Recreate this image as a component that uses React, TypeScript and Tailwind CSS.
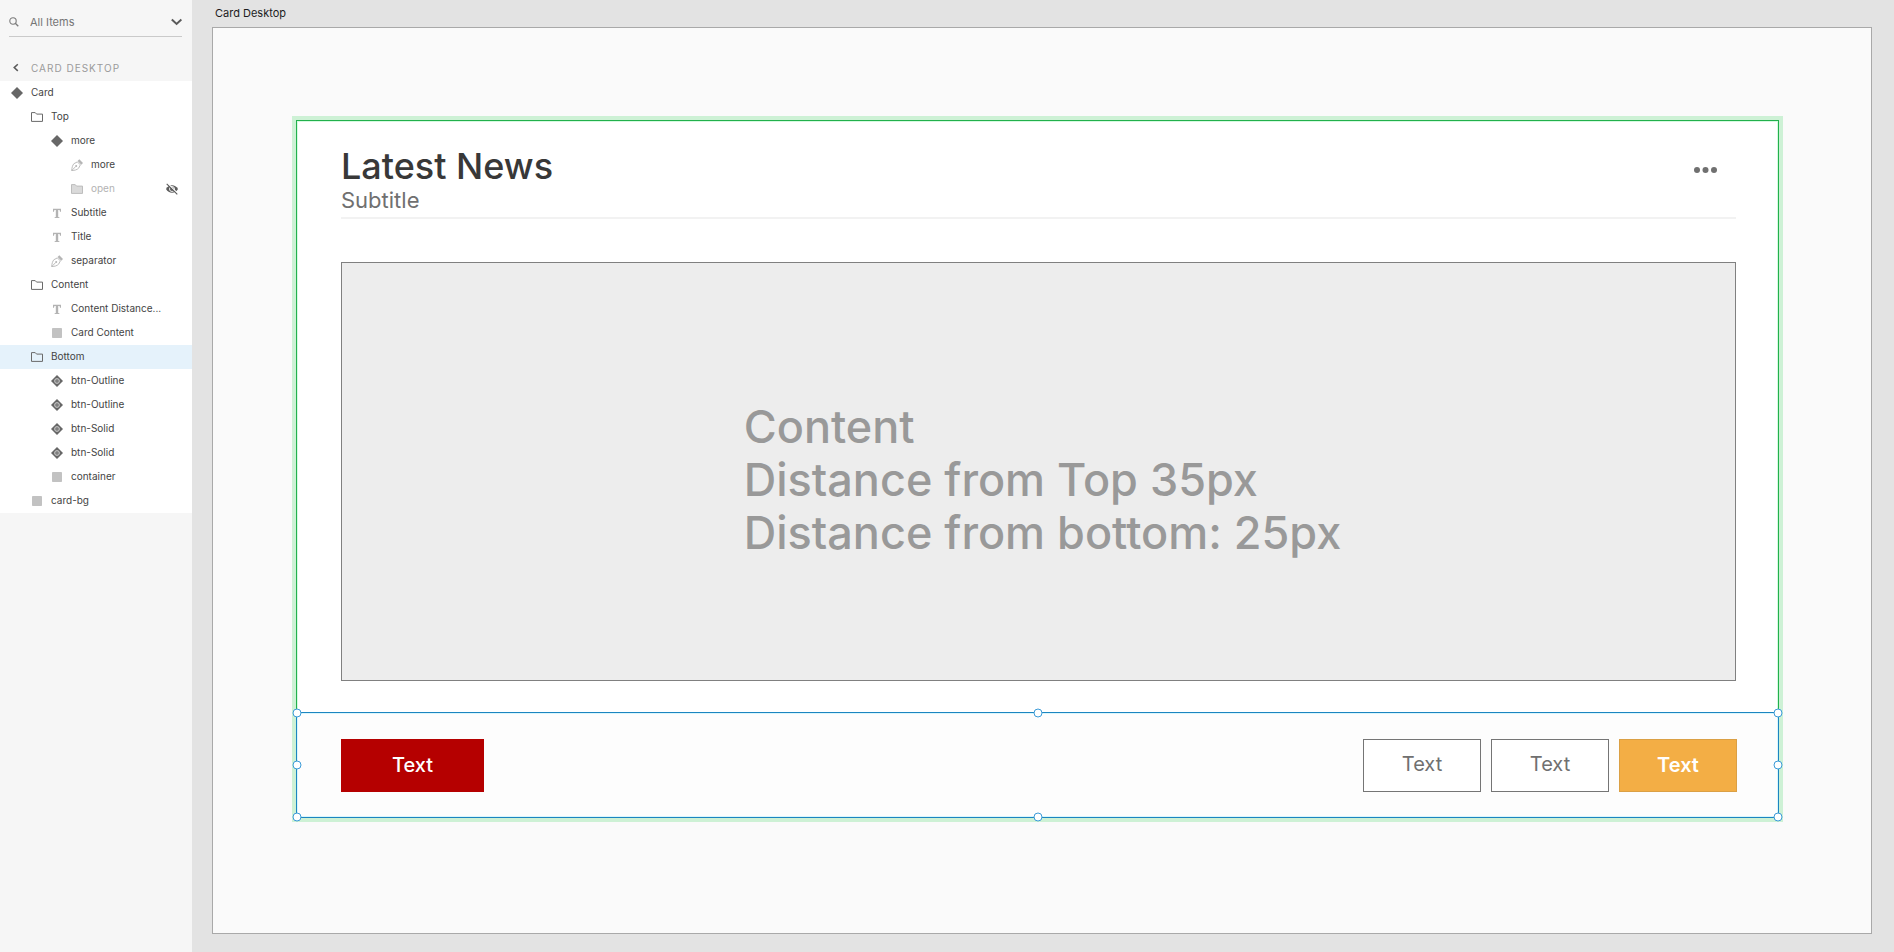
import { useState } from "react";
import clsx from "clsx";

type LayerKind = "component" | "instance" | "folder" | "folderHidden" | "pen" | "text" | "shape";

type Layer = {
  id: number;
  name: string;
  kind: LayerKind;
  depth: number;
  hidden?: boolean;
};

const LAYERS: Layer[] = [
  { id: 1, name: "Card", kind: "component", depth: 0 },
  { id: 2, name: "Top", kind: "folder", depth: 1 },
  { id: 3, name: "more", kind: "component", depth: 2 },
  { id: 4, name: "more", kind: "pen", depth: 3 },
  { id: 5, name: "open", kind: "folderHidden", depth: 3, hidden: true },
  { id: 6, name: "Subtitle", kind: "text", depth: 2 },
  { id: 7, name: "Title", kind: "text", depth: 2 },
  { id: 8, name: "separator", kind: "pen", depth: 2 },
  { id: 9, name: "Content", kind: "folder", depth: 1 },
  { id: 10, name: "Content Distance...", kind: "text", depth: 2 },
  { id: 11, name: "Card Content", kind: "shape", depth: 2 },
  { id: 12, name: "Bottom", kind: "folder", depth: 1 },
  { id: 13, name: "btn-Outline", kind: "instance", depth: 2 },
  { id: 14, name: "btn-Outline", kind: "instance", depth: 2 },
  { id: 15, name: "btn-Solid", kind: "instance", depth: 2 },
  { id: 16, name: "btn-Solid", kind: "instance", depth: 2 },
  { id: 17, name: "container", kind: "shape", depth: 2 },
  { id: 18, name: "card-bg", kind: "shape", depth: 1 },
];

const INDENT = ["pl-[11px]", "pl-[31px]", "pl-[51px]", "pl-[71px]"];

const HANDLES = [
  "left-0 top-0",
  "left-1/2 top-0",
  "left-full top-0",
  "left-0 top-1/2",
  "left-full top-1/2",
  "left-0 top-full",
  "left-1/2 top-full",
  "left-full top-full",
];

const btnCn = "h-[53px] border text-xl";
const outlineCn = `${btnCn} w-[118px] border-[#757575] bg-white pb-0.5 text-[#707070]`;

function LayerIcon({ kind }: { kind: LayerKind }) {
  return (
    <svg viewBox="0 0 12 12" className="size-3 shrink-0" aria-hidden="true">
      {kind === "component" && <path d="M6 0 12 6 6 12 0 6Z" fill="#676767" />}
      {kind === "instance" && (
        <>
          <path d="M6 0 12 6 6 12 0 6Z" fill="#676767" />
          <circle cx="6" cy="6" r="2.4" fill="#808080" stroke="#d2d2d2" strokeWidth=".9" />
        </>
      )}
      {kind === "folder" && (
        <path
          d="M.5 10.4V1.6H4.2L5.6 3.1H11.5V10.4Z"
          fill="none"
          stroke="#6a6a6a"
          strokeLinejoin="round"
        />
      )}
      {kind === "folderHidden" && (
        <path
          d="M.5 10.4V1.6H4.2L5.6 3.1H11.5V10.4Z"
          fill="#dadada"
          stroke="#bdbdbd"
          strokeLinejoin="round"
        />
      )}
      {kind === "pen" && (
        <>
          <path
            d="M.7 11.6C.9 8.6 1.5 6.3 2.9 4.7L6.4 2.9 9.4 5.9 7.6 9.2C6 10.8 3.8 11.4.7 11.6ZM.9 11.4 4.7 7.5"
            fill="none"
            stroke="#b5b5b5"
            strokeWidth=".9"
          />
          <circle cx="5.2" cy="7" r="1" fill="#b5b5b5" />
          <path d="M6.6 2 8.3.3 12 4 10.3 5.7Z" fill="#b5b5b5" />
        </>
      )}
      {kind === "text" && (
        <path
          d="M2 1.8H10V4.8H9L8.6 3H7.2V9.9L8.4 10.2V11H3.6V10.2L4.8 9.9V3H3.4L3 4.8H2Z"
          fill="#b3b3b3"
        />
      )}
      {kind === "shape" && <rect x="1" y="1" width="10" height="10" rx=".8" fill="#c2c2c2" />}
    </svg>
  );
}

function HiddenIcon() {
  return (
    <svg viewBox="0 0 12 12" className="size-3" aria-hidden="true">
      <path d="M0 6C1.5 3.4 3.6 2.2 6 2.2S10.5 3.4 12 6C10.5 8.6 8.4 9.8 6 9.8S1.5 8.6 0 6Z" fill="#5c5c5c" />
      <circle cx="6" cy="6" r="2.5" fill="none" stroke="#fff" strokeWidth=".9" />
      <path d="M1.4.2 12 10.6" stroke="#fff" strokeWidth="1.2" />
      <path d="M.7.8 11.3 11.4" stroke="#5c5c5c" strokeWidth="1.1" />
    </svg>
  );
}

function LayersPanel() {
  const [query, setQuery] = useState("");
  const [selected, setSelected] = useState(12);

  return (
    <aside className="w-48 shrink-0 bg-[#f6f6f6]">
      <div className="mr-2.5 ml-[9px] flex h-[37px] items-center border-b border-[#cacaca] pt-2">
        <svg viewBox="0 0 10 10" className="size-2.5 shrink-0" aria-hidden="true">
          <circle cx="4" cy="4" r="3.2" fill="none" stroke="#7b7b7b" strokeWidth="1.1" />
          <path d="M6.3 6.3 9.3 9.3" stroke="#7b7b7b" strokeWidth="1.3" />
        </svg>
        <input
          type="text"
          aria-label="Search layers"
          value={query}
          onChange={(e) => setQuery(e.target.value)}
          placeholder="All Items"
          className="ml-[11px] min-w-0 flex-1 bg-transparent text-[11px] text-[#555] outline-none placeholder:text-[#757575]"
        />
        <button type="button" aria-label="Filter items">
          <svg viewBox="0 0 12 12" className="size-3" aria-hidden="true">
            <path d="M1.8 3.5 6.6 8 11.4 3.5" fill="none" stroke="#5a5a5a" strokeWidth="2" />
          </svg>
        </button>
      </div>

      <div className="flex h-11 items-end pb-1.5 pl-3">
        <button type="button" className="flex items-center text-[10px] leading-[14px] tracking-widest text-[#9b9b9b]">
          <svg viewBox="0 0 8 10" className="mr-[11px] h-2.5 w-2" aria-hidden="true">
            <path d="M5.8 1.3 2.2 4.6 5.8 7.9" fill="none" stroke="#5a5a5a" strokeWidth="1.5" />
          </svg>
          CARD DESKTOP
        </button>
      </div>

      <ul className="bg-white">
        {LAYERS.map((layer) => (
          <li
            key={layer.id}
            className={clsx("flex h-6 items-center pr-3.5 pb-px", selected === layer.id && "bg-[#e5f2fb]")}
          >
            <button
              type="button"
              onClick={() => setSelected(layer.id)}
              className={clsx(
                "flex h-full flex-1 items-center gap-2 text-left text-[10px] whitespace-nowrap",
                INDENT[layer.depth],
                layer.hidden ? "text-[#b3b3b3]" : "text-[#444]"
              )}
            >
              <LayerIcon kind={layer.kind} />
              {layer.name}
            </button>
            {layer.hidden && (
              <button type="button" aria-label={`Show ${layer.name}`}>
                <HiddenIcon />
              </button>
            )}
          </li>
        ))}
      </ul>
    </aside>
  );
}

function Card() {
  return (
    <article className="border border-[#22b04c] bg-white shadow-[inset_0_0_0_1px_#d5fbe0] ring-4 ring-[#cdf1d5]">
      <div className="pt-6 pr-[42px] pl-11">
        <header className="flex items-start justify-between border-b-2 border-[#f2f2f2] pb-1">
          <div>
            <h1 className="text-4xl leading-[42px] font-medium text-[#383838]">Latest News</h1>
            <p className="text-[22px] leading-[26px] text-[#707070]">Subtitle</p>
          </div>
          <button type="button" aria-label="More" className="mt-[22px] mr-[18px]">
            <svg viewBox="0 0 24 6" className="h-1.5 w-6" fill="#707070" aria-hidden="true">
              <circle cx="3" cy="3" r="3" />
              <circle cx="11.5" cy="3" r="3" />
              <circle cx="20" cy="3" r="3" />
            </svg>
          </button>
        </header>

        <section className="mt-[43px] mb-[31px] flex h-[419px] items-center justify-center border border-[#808080] bg-[#ededed] pt-4 pl-2">
          <p className="text-[45px] leading-[53px] font-medium text-[#999]">
            Content
            <br />
            Distance from Top 35px
            <br />
            Distance from bottom: 25px
          </p>
        </section>
      </div>

      {/* selected group outline */}
      <footer className="relative -mx-px -mb-px flex h-[106px] items-center justify-between border border-[#1c85c0] bg-[#fdfdfd] pr-[41px] pl-11 shadow-[inset_0_0_0_1px_#d9f6fd]">
        <button type="button" className={`${btnCn} w-[143px] border-[#b50000] bg-[#b50000] font-medium text-white`}>
          Text
        </button>
        <div className="flex gap-2.5">
          <button type="button" className={outlineCn}>
            Text
          </button>
          <button type="button" className={outlineCn}>
            Text
          </button>
          <button type="button" className={`${btnCn} w-[118px] border-[#dba045] bg-[#f3ae45] font-semibold text-white`}>
            Text
          </button>
        </div>
        <div className="pointer-events-none absolute inset-0">
          {HANDLES.map((pos) => (
            <span
              key={pos}
              className={`absolute size-[9px] -translate-1/2 rounded-full border border-[#3c9bd8] bg-white ${pos}`}
            />
          ))}
        </div>
      </footer>
    </article>
  );
}

export default function App() {
  return (
    <div className="flex min-h-screen bg-[#e3e3e3] font-['Inter',sans-serif]">
      <LayersPanel />
      <main className="flex flex-1 flex-col pr-[22px] pb-[18px] pl-5">
        <h2 className="h-[27px] pl-[3px] text-[11px] leading-[27px] text-[#1c1c1c]">Card Desktop</h2>
        <div className="flex-1 border border-[#a9a9a9] bg-[#fafafa] pt-[92px] pr-[92px] pb-24 pl-[83px]">
          <Card />
        </div>
      </main>
    </div>
  );
}
